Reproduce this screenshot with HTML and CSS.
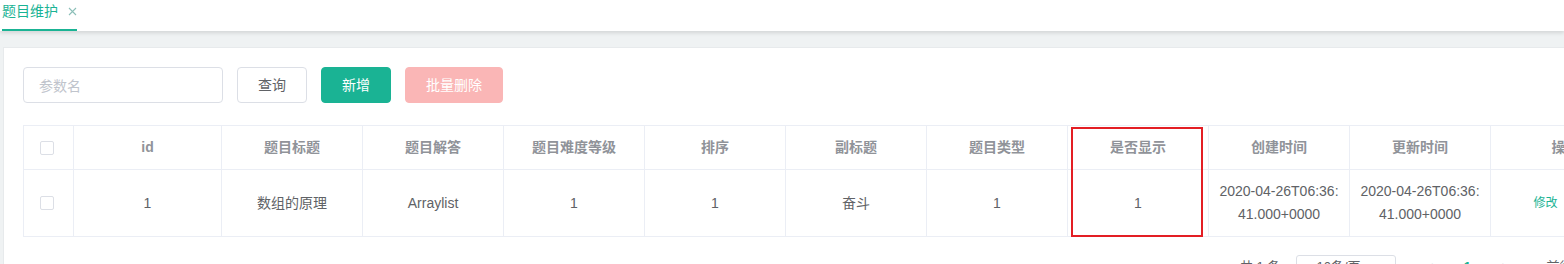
FILE: index.html
```html
<!DOCTYPE html>
<html lang="zh-CN">
<head>
<meta charset="utf-8">
<title>题目维护</title>
<link rel="stylesheet" href="styles.css">
</head>
<body>
<div class="tabs">
  <div class="tab active">
    <span class="tab-label">题目维护</span>
    <svg class="tab-close" width="9" height="9" viewBox="0 0 9 9"><path d="M1 1L8 8M8 1L1 8" stroke="#8cbfb8" stroke-width="1.1" fill="none"/></svg>
  </div>
</div>
<div class="main">
  <div class="card">
    <div class="toolbar">
      <div class="input"><span class="placeholder">参数名</span></div>
      <button class="btn btn-default">查询</button>
      <button class="btn btn-primary">新增</button>
      <button class="btn btn-danger-disabled">批量删除</button>
    </div>
    <div class="table">
      <div class="row head">
        <div class="cell check"><span class="checkbox"></span></div>
        <div class="cell">id</div>
        <div class="cell">题目标题</div>
        <div class="cell">题目解答</div>
        <div class="cell">题目难度等级</div>
        <div class="cell">排序</div>
        <div class="cell">副标题</div>
        <div class="cell">题目类型</div>
        <div class="cell">是否显示</div>
        <div class="cell">创建时间</div>
        <div class="cell">更新时间</div>
        <div class="cell">操作</div>
      </div>
      <div class="row body">
        <div class="cell check"><span class="checkbox"></span></div>
        <div class="cell">1</div>
        <div class="cell">数组的原理</div>
        <div class="cell">Arraylist</div>
        <div class="cell">1</div>
        <div class="cell">1</div>
        <div class="cell">奋斗</div>
        <div class="cell">1</div>
        <div class="cell">1</div>
        <div class="cell wrap">2020-04-26T06:36:41.000+0000</div>
        <div class="cell wrap">2020-04-26T06:36:41.000+0000</div>
        <div class="cell ops"><span class="link">修改</span><span class="link">删除</span></div>
      </div>
      <div class="highlight"></div>
    </div>
    <div class="pagination">
      <span class="total">共 1 条</span>
      <div class="select">10条/页</div>
      <span class="pg-arrow">&lt;</span>
      <span class="pg-num active">1</span>
      <span class="pg-arrow">&gt;</span>
      <span class="jump">前往</span>
    </div>
  </div>
</div>
</body>
</html>
```
FILE: styles.css
```css
html, body {
  margin: 0;
  padding: 0;
  overflow: hidden;
  background: #fff;
}
body {
  width: 1564px;
  height: 264px;
  font-family: "Liberation Sans", "Noto Sans CJK SC", sans-serif;
  font-size: 14px;
  color: #606266;
}
.tabs {
  position: relative;
  z-index: 1;
  height: 31px;
  background: #fff;
  display: flex;
  box-shadow: 0 2px 4px rgba(0, 0, 0, 0.12);
}
.tab {
  margin-left: 2px;
  width: 75px;
  box-sizing: border-box;
  border-bottom: 2px solid #1ab394;
  display: flex;
  align-items: flex-start;
}
.tab-label {
  color: #1ab394;
  font-size: 14px;
  line-height: 22px;
}
.tab-close {
  margin: 7px 0 0 10px;
}
.main {
  background: #eff2f3;
  padding: 16px 0 0 3px;
  width: 1800px;
  height: 300px;
}
.card {
  background: #fff;
  border: 1px solid #e7eaec;
  border-right: none;
  padding: 19px 19px;
  height: 400px;
}
.toolbar {
  display: flex;
  gap: 14px;
  height: 36px;
  margin-bottom: 22px;
}
.input {
  width: 200px;
  height: 36px;
  box-sizing: border-box;
  border: 1px solid #dcdfe6;
  border-radius: 4px;
  padding: 0 15px;
  display: flex;
  align-items: center;
}
.placeholder {
  color: #c0c4cc;
  font-size: 14px;
}
.btn {
  height: 36px;
  box-sizing: border-box;
  padding: 0 20px;
  border: 1px solid #dcdfe6;
  border-radius: 4px;
  font-family: inherit;
  font-size: 14px;
  background: #fff;
  color: #606266;
  line-height: 1;
}
.btn-primary {
  background: #1ab394;
  border-color: #1ab394;
  color: #fff;
}
.btn-danger-disabled {
  background: #fab6b6;
  border-color: #fab6b6;
  color: #fff;
}
.table {
  position: relative;
  border-top: 1px solid #ebeef5;
  border-left: 1px solid #ebeef5;
  width: max-content;
}
.row {
  display: grid;
  grid-template-columns: 50px 148px repeat(9, 141px) 150px;
}
.cell {
  box-sizing: border-box;
  border-right: 1px solid #ebeef5;
  border-bottom: 1px solid #ebeef5;
  padding: 0 10px;
  display: flex;
  align-items: center;
  justify-content: center;
  text-align: center;
  line-height: 23px;
  word-break: break-all;
}
.cell.check {
  justify-content: flex-start;
  padding: 0 0 0 16px;
}
.head .cell {
  height: 44px;
  color: #909399;
  font-weight: bold;
}
.body .cell {
  height: 67px;
  color: #606266;
}
.checkbox {
  display: block;
  width: 14px;
  height: 14px;
  box-sizing: border-box;
  border: 1px solid #dcdfe6;
  border-radius: 2px;
  background: #fff;
}
.ops {
  gap: 16px;
}
.link {
  color: #1ab394;
  font-size: 12px;
}
.highlight {
  position: absolute;
  left: 1047px;
  top: 1px;
  width: 132px;
  height: 110px;
  box-sizing: border-box;
  border: 2px solid #e31e24;
}
.pagination {
  display: flex;
  align-items: flex-start;
  height: 28px;
  margin-top: 18px;
  padding-left: 1217px;
  font-size: 13px;
  color: #606266;
  line-height: 24px;
}
.total {
  margin-right: 16px;
}
.select {
  width: 100px;
  height: 28px;
  box-sizing: border-box;
  border: 1px solid #dcdfe6;
  border-radius: 3px;
  padding-left: 19px;
  line-height: 22px;
  margin-right: 18px;
}
.pg-arrow {
  color: #c0c4cc;
  width: 30px;
  text-align: center;
}
.pg-num {
  width: 30px;
  text-align: center;
  margin: 0 8px;
  font-weight: bold;
}
.pg-num.active {
  color: #1ab394;
}
.jump {
  margin-left: 26px;
}
```
